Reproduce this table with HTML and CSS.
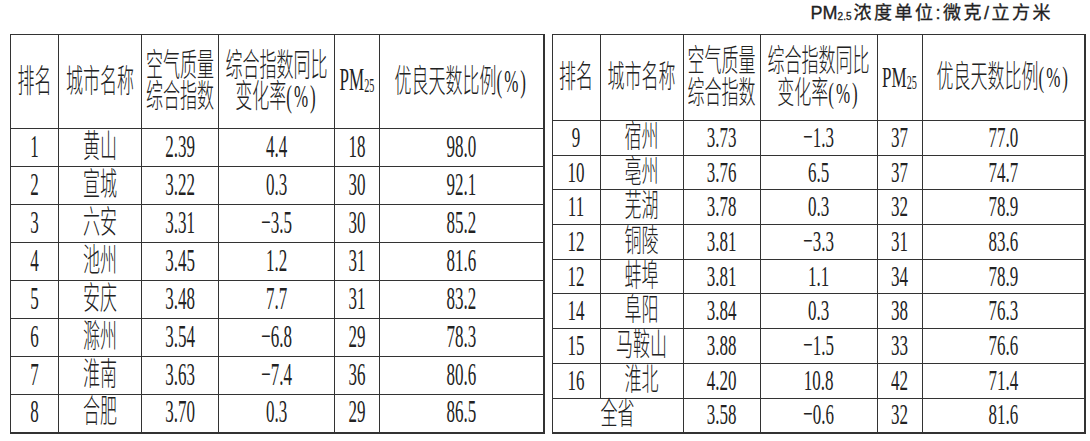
FILE: index.html
```html
<!DOCTYPE html>
<html lang="zh-CN">
<head>
<meta charset="utf-8">
<title>空气质量排名</title>
<link rel="stylesheet" href="styles.css">
</head>
<body>
<div class="page">
  <div class="title"><span class="pm">PM<sub>2.5</sub></span>浓度单位:微克/立方米</div>
  <div class="tables">
    <table class="tbl left">
      <colgroup><col class="w1"><col class="w2"><col class="w3"><col class="w4"><col class="w5"><col class="w6"></colgroup>
      <thead>
        <tr class="head">
          <th><div class="c"><span class="t">排名</span></div></th>
          <th><div class="c"><span class="t">城市名称</span></div></th>
          <th><div class="c"><span class="t">空气质量<br>综合指数</span></div></th>
          <th><div class="c"><span class="t">综合指数同比<br>变化率<span class="pct">(%)</span></span></div></th>
          <th><div class="c"><span class="t num">PM<sub>25</sub></span></div></th>
          <th><div class="c"><span class="t">优良天数比例<span class="pct">(%)</span></span></div></th>
        </tr>
      </thead>
      <tbody>
        <tr><td><div class="c"><span class="t">1</span></div></td><td><div class="c"><span class="t">黄山</span></div></td><td><div class="c"><span class="t">2.39</span></div></td><td><div class="c"><span class="t">4.4</span></div></td><td><div class="c"><span class="t">18</span></div></td><td><div class="c"><span class="t">98.0</span></div></td></tr>
        <tr><td><div class="c"><span class="t">2</span></div></td><td><div class="c"><span class="t">宣城</span></div></td><td><div class="c"><span class="t">3.22</span></div></td><td><div class="c"><span class="t">0.3</span></div></td><td><div class="c"><span class="t">30</span></div></td><td><div class="c"><span class="t">92.1</span></div></td></tr>
        <tr><td><div class="c"><span class="t">3</span></div></td><td><div class="c"><span class="t">六安</span></div></td><td><div class="c"><span class="t">3.31</span></div></td><td><div class="c"><span class="t">−3.5</span></div></td><td><div class="c"><span class="t">30</span></div></td><td><div class="c"><span class="t">85.2</span></div></td></tr>
        <tr><td><div class="c"><span class="t">4</span></div></td><td><div class="c"><span class="t">池州</span></div></td><td><div class="c"><span class="t">3.45</span></div></td><td><div class="c"><span class="t">1.2</span></div></td><td><div class="c"><span class="t">31</span></div></td><td><div class="c"><span class="t">81.6</span></div></td></tr>
        <tr><td><div class="c"><span class="t">5</span></div></td><td><div class="c"><span class="t">安庆</span></div></td><td><div class="c"><span class="t">3.48</span></div></td><td><div class="c"><span class="t">7.7</span></div></td><td><div class="c"><span class="t">31</span></div></td><td><div class="c"><span class="t">83.2</span></div></td></tr>
        <tr><td><div class="c"><span class="t">6</span></div></td><td><div class="c"><span class="t">滁州</span></div></td><td><div class="c"><span class="t">3.54</span></div></td><td><div class="c"><span class="t">−6.8</span></div></td><td><div class="c"><span class="t">29</span></div></td><td><div class="c"><span class="t">78.3</span></div></td></tr>
        <tr><td><div class="c"><span class="t">7</span></div></td><td><div class="c"><span class="t">淮南</span></div></td><td><div class="c"><span class="t">3.63</span></div></td><td><div class="c"><span class="t">−7.4</span></div></td><td><div class="c"><span class="t">36</span></div></td><td><div class="c"><span class="t">80.6</span></div></td></tr>
        <tr><td><div class="c"><span class="t">8</span></div></td><td><div class="c"><span class="t">合肥</span></div></td><td><div class="c"><span class="t">3.70</span></div></td><td><div class="c"><span class="t">0.3</span></div></td><td><div class="c"><span class="t">29</span></div></td><td><div class="c"><span class="t">86.5</span></div></td></tr>
      </tbody>
    </table>
    <table class="tbl right">
      <colgroup><col class="w1"><col class="w2"><col class="w3"><col class="w4r"><col class="w5"><col class="w6r"></colgroup>
      <thead>
        <tr class="head">
          <th><div class="c"><span class="t">排名</span></div></th>
          <th><div class="c"><span class="t">城市名称</span></div></th>
          <th><div class="c"><span class="t">空气质量<br>综合指数</span></div></th>
          <th><div class="c"><span class="t">综合指数同比<br>变化率<span class="pct">(%)</span></span></div></th>
          <th><div class="c"><span class="t num">PM<sub>25</sub></span></div></th>
          <th><div class="c"><span class="t">优良天数比例<span class="pct">(%)</span></span></div></th>
        </tr>
      </thead>
      <tbody>
        <tr><td><div class="c"><span class="t">9</span></div></td><td><div class="c"><span class="t">宿州</span></div></td><td><div class="c"><span class="t">3.73</span></div></td><td><div class="c"><span class="t">−1.3</span></div></td><td><div class="c"><span class="t">37</span></div></td><td><div class="c"><span class="t">77.0</span></div></td></tr>
        <tr><td><div class="c"><span class="t">10</span></div></td><td><div class="c"><span class="t">亳州</span></div></td><td><div class="c"><span class="t">3.76</span></div></td><td><div class="c"><span class="t">6.5</span></div></td><td><div class="c"><span class="t">37</span></div></td><td><div class="c"><span class="t">74.7</span></div></td></tr>
        <tr><td><div class="c"><span class="t">11</span></div></td><td><div class="c"><span class="t">芜湖</span></div></td><td><div class="c"><span class="t">3.78</span></div></td><td><div class="c"><span class="t">0.3</span></div></td><td><div class="c"><span class="t">32</span></div></td><td><div class="c"><span class="t">78.9</span></div></td></tr>
        <tr><td><div class="c"><span class="t">12</span></div></td><td><div class="c"><span class="t">铜陵</span></div></td><td><div class="c"><span class="t">3.81</span></div></td><td><div class="c"><span class="t">−3.3</span></div></td><td><div class="c"><span class="t">31</span></div></td><td><div class="c"><span class="t">83.6</span></div></td></tr>
        <tr><td><div class="c"><span class="t">12</span></div></td><td><div class="c"><span class="t">蚌埠</span></div></td><td><div class="c"><span class="t">3.81</span></div></td><td><div class="c"><span class="t">1.1</span></div></td><td><div class="c"><span class="t">34</span></div></td><td><div class="c"><span class="t">78.9</span></div></td></tr>
        <tr><td><div class="c"><span class="t">14</span></div></td><td><div class="c"><span class="t">阜阳</span></div></td><td><div class="c"><span class="t">3.84</span></div></td><td><div class="c"><span class="t">0.3</span></div></td><td><div class="c"><span class="t">38</span></div></td><td><div class="c"><span class="t">76.3</span></div></td></tr>
        <tr><td><div class="c"><span class="t">15</span></div></td><td><div class="c"><span class="t">马鞍山</span></div></td><td><div class="c"><span class="t">3.88</span></div></td><td><div class="c"><span class="t">−1.5</span></div></td><td><div class="c"><span class="t">33</span></div></td><td><div class="c"><span class="t">76.6</span></div></td></tr>
        <tr><td><div class="c"><span class="t">16</span></div></td><td><div class="c"><span class="t">淮北</span></div></td><td><div class="c"><span class="t">4.20</span></div></td><td><div class="c"><span class="t">10.8</span></div></td><td><div class="c"><span class="t">42</span></div></td><td><div class="c"><span class="t">71.4</span></div></td></tr>
        <tr><td colspan="2"><div class="c"><span class="t">全省</span></div></td><td><div class="c"><span class="t">3.58</span></div></td><td><div class="c"><span class="t">−0.6</span></div></td><td><div class="c"><span class="t">32</span></div></td><td><div class="c"><span class="t">81.6</span></div></td></tr>
      </tbody>
    </table>
  </div>
</div>
</body>
</html>
```

FILE: styles.css
```css
html, body {
  margin: 0;
  padding: 0;
  background: #ffffff;
}

.page {
  width: 1090px;
  height: 441px;
  overflow: hidden;
}

.title {
  height: 34px;
  box-sizing: border-box;
  padding-right: 37px;
  padding-bottom: 8px;
  display: flex;
  justify-content: flex-end;
  align-items: center;
  font-family: "Liberation Sans", "Noto Sans CJK SC", sans-serif;
  font-size: 18px;
  line-height: 20px;
  letter-spacing: 2.5px;
  color: #222222;
  -webkit-text-stroke: 0.3px #222222;
}

.title .pm {
  letter-spacing: 0;
  margin-right: 2px;
}

.title sub {
  font-size: 10px;
  line-height: 10px;
  vertical-align: -1px;
  letter-spacing: 0;
}

.tables {
  display: flex;
  gap: 7px;
  padding-left: 10px;
}

.tbl {
  border-collapse: collapse;
  table-layout: fixed;
  width: 533px;
  border-right: 2px solid #333333;
  border-bottom: 2px solid #333333;
  color: #222222;
  font-family: "Liberation Serif", "Noto Sans CJK SC", serif;
  font-size: 17px;
}

.w1 { width: 48px; }
.w2 { width: 83px; }
.w3 { width: 77px; }
.w4 { width: 116px; }
.w4r { width: 117px; }
.w5 { width: 45px; }
.w6 { width: 164px; }
.w6r { width: 163px; }

.tbl th, .tbl td {
  border: 1px solid #333333;
  padding: 0;
  font-weight: 300;
}

.c {
  display: flex;
  justify-content: center;
  align-items: center;
  height: 100%;
}

.t {
  display: block;
  white-space: nowrap;
  text-align: center;
  flex: none;
}

.left .t { transform: scaleY(1.9); }
.left .head { height: 94px; }
.left tbody tr { height: 38px; }
.left th .t { line-height: 16px; }
.left td .t { line-height: 18px; }

.right .t { transform: scaleY(1.78); }
.right .head { height: 86px; }
.right tbody tr { height: 34.7px; }
.right th .t { line-height: 17.5px; }
.right td .t { line-height: 18px; }

.pct {
  letter-spacing: 0.12em;
}

.num sub {
  font-size: 0.6em;
  line-height: 1;
  vertical-align: -0.1em;
}
```
